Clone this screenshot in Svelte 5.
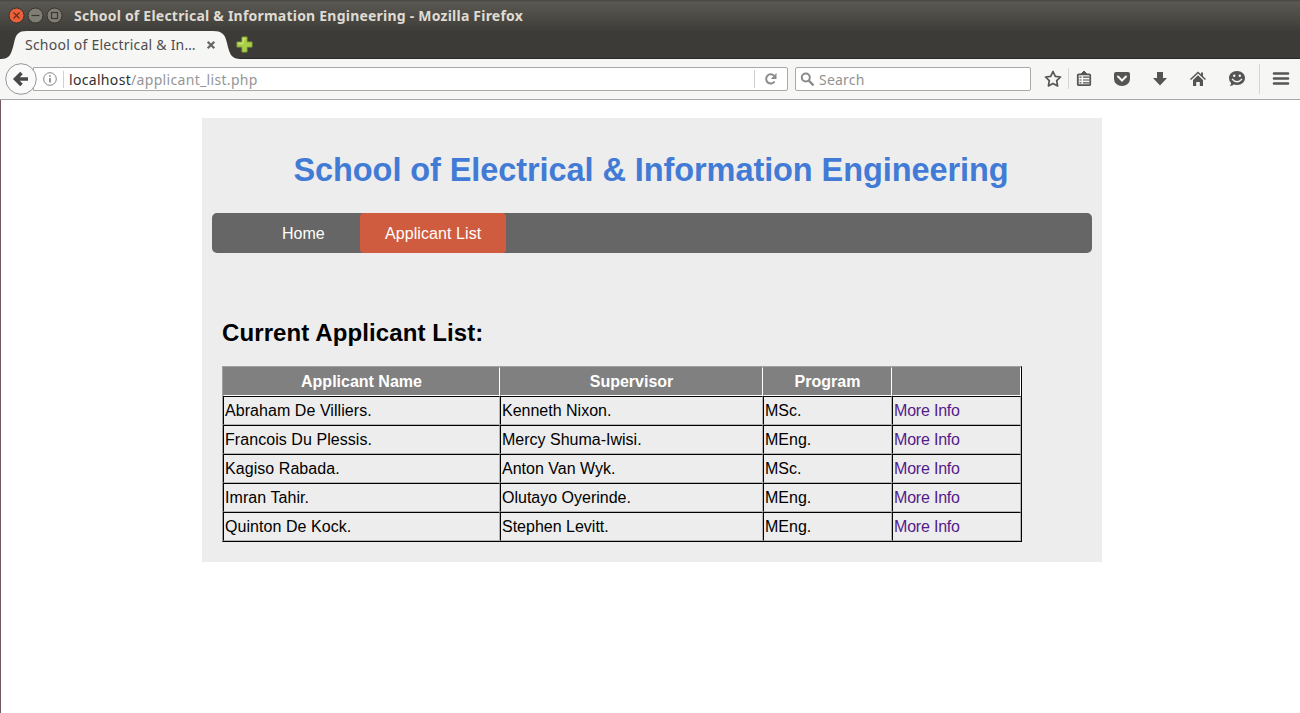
<script>
  const rows = [
    ['Abraham De Villiers.', 'Kenneth Nixon.', 'MSc.'],
    ['Francois Du Plessis.', 'Mercy Shuma-Iwisi.', 'MEng.'],
    ['Kagiso Rabada.', 'Anton Van Wyk.', 'MSc.'],
    ['Imran Tahir.', 'Olutayo Oyerinde.', 'MEng.'],
    ['Quinton De Kock.', 'Stephen Levitt.', 'MEng.']
  ];
</script>

<div class="window">
  <header class="titlebar">
    <svg class="controls" width="64" height="31" viewBox="0 0 64 31">
      <circle cx="16.500" cy="15.500" r="7.500" fill="#e9603a" stroke="#35332f" />
      <path d="M13.500 12.500l6 6m0-6l-6 6" stroke="#6d2b18" stroke-width="1.300" />
      <circle cx="35.500" cy="15.500" r="7.500" fill="#807d75" stroke="#35332f" />
      <path d="M31.500 15.500h8" stroke="#3b3934" stroke-width="1.200" />
      <circle cx="54.500" cy="15.500" r="7.500" fill="#807d75" stroke="#35332f" />
      <rect x="51.500" y="12.500" width="6" height="6" fill="none" stroke="#3b3934" stroke-width="1.200" />
    </svg>
    <span class="wtitle">School of Electrical &amp; Information Engineering - Mozilla Firefox</span>
  </header>
  <div class="tabs">
    <div class="tab">
      <svg class="tabshape" width="242" height="28" viewBox="0 0 242 28"><path d="M0 28C10 28 11 24 14 12C16 3 18 0 27 0H213C222 0 225 3 227 12C230 24 231 28 242 28Z" fill="#f6f6f4" /></svg>
      <span class="tabtext">School of Electrical &amp; In…</span>
      <svg class="close" width="10" height="10" viewBox="0 0 10 10"><path d="M1.700 1.700l6.600 6.600m0-6.600l-6.600 6.600" stroke="#666" stroke-width="2.200" /></svg>
    </div>
    <svg class="plus" width="17" height="17" viewBox="0 0 17 17"><path d="M6 1h5v5h5v5h-5v5H6v-5H1V6h5z" fill="#a9d148" stroke="#84a636" /><path d="M7 2.500h3m-8 5h5v-5" fill="none" stroke="#d0eb81" /></svg>
  </div>
  <div class="toolbar">
    <svg class="back" width="32" height="32" viewBox="0 0 32 32"><circle cx="16" cy="16" r="15.300" fill="#fafafa" stroke="#979797" /><path d="M16.500 10L10.500 16l6 6M11 16h12" fill="none" stroke="#484848" stroke-width="3.600" /></svg>
    <div class="urlbar">
      <svg class="info" width="14" height="14" viewBox="0 0 14 14"><circle cx="7" cy="7" r="6.300" fill="none" stroke="#858585" /><path d="M7 6v4.500M7 3.200v1.600" stroke="#777" stroke-width="1.500" /></svg>
      <i class="sep"></i>
      <span class="url"><b>localhost</b>/applicant_list.php</span>
      <div class="reload"><svg width="14" height="14" viewBox="0 0 14 14"><path d="M10.600 9.500A4.600 4.600 0 1 1 10 3.700" fill="none" stroke="#8b8b8b" stroke-width="2" /><path d="M12.500 1v6H6.800z" fill="#8b8b8b" /></svg></div>
    </div>
    <div class="search">
      <svg width="15" height="15" viewBox="0 0 15 15"><circle cx="5.800" cy="5.500" r="4" fill="none" stroke="#8b8b8b" stroke-width="2" /><path d="M8.700 8.500l4.800 4.800" stroke="#8b8b8b" stroke-width="2.400" /></svg>
      <span>Search</span>
    </div>
    <svg class="icons" width="260" height="40" viewBox="0 0 260 40" fill="none" stroke="#555">
      <path d="M13 12.500l2.300 4.800 5.200.700-3.800 3.700.900 5.200-4.600-2.500-4.600 2.500.900-5.200-3.800-3.700 5.200-.700z" stroke-width="1.700" stroke-linejoin="round" />
      <path d="M28.500 9v21M219.500 5v30" stroke="#d6d6d6" />
      <path d="M41 15l3-3 3 3z" fill="#555" stroke-width="1" />
      <rect x="37.800" y="15.300" width="12.400" height="10.900" rx="1" stroke-width="1.800" />
      <path d="M43 18.200h6M43 21h6M43 23.800h6M39.500 18.200h2M39.500 21h2M39.500 23.800h2" stroke-width="1.200" />
      <path d="M74 15q0-2 2-2h12q2 0 2 2v5a8 7 0 0 1-16 0z" fill="#555" stroke="none" /><path d="M78 17.500l4 4 4-4" stroke="#f6f6f4" stroke-width="2" stroke-linecap="round" />
      <path d="M117 13h6v6h4l-7 7.500-7-7.500h4z" fill="#555" stroke="none" />
      <path d="M150.500 20.500l7.500-7 7.500 7" stroke-width="1.500" /><path d="M153 21l5-4.800 5 4.800V27h-3.200v-4h-3.600v4H153zM161 13.500h2v4l-2-2z" fill="#555" stroke="none" />
      <path d="M197 12c4.600 0 8 2.900 8 7s-3.400 7-8 7c-1.200 0-2.200-.200-3.200-.500-1 .900-2.500 1.400-4.100 1.300 1-.800 1.400-1.800 1.400-2.700A6.600 6.600 0 0 1 189 19c0-4.100 3.400-7 8-7z" fill="#555" stroke="none" />
      <circle cx="194.200" cy="16.700" r="1.200" fill="#f6f6f4" stroke="none" /><circle cx="199.800" cy="16.700" r="1.200" fill="#f6f6f4" stroke="none" /><path d="M192 20q5 5.500 10 0" stroke="#f6f6f4" stroke-width="1.300" />
      <path d="M234 14.500h14M234 19.500h14M234 24.500h14" stroke-width="2.600" stroke-linecap="round" />
    </svg>
  </div>
  <main>
    <section class="page">
      <h1>School of Electrical &amp; Information Engineering</h1>
      <nav><a class="home" href="#home">Home</a><a class="active" href="#list">Applicant List</a></nav>
      <h2>Current Applicant List:</h2>
      <div class="table">
        <div class="row head"><div>Applicant Name</div><div>Supervisor</div><div>Program</div><div></div></div>
        {#each rows as r}
          <div class="row"><div>{r[0]}</div><div>{r[1]}</div><div>{r[2]}</div><div><a href="#info">More Info</a></div></div>
        {/each}
      </div>
    </section>
  </main>
</div>

<style>
  :global(body) { margin: 0; background: #fff; overflow: hidden; }
  * { box-sizing: border-box; }
  .window { width: 1300px; height: 713px; border-left: 1px solid #72595f; background: #fff; font-family: "Liberation Sans", Arial, sans-serif; }
  svg { display: block; flex: none; }
  .titlebar { height: 31px; margin-left: -1px; display: flex; align-items: center; background: linear-gradient(#46443f 0, #5a5851 2px, #3f3d39 100%); }
  .wtitle { margin-left: 10px; font: bold 14px "Noto Sans", sans-serif; color: #dfdbd2; white-space: nowrap; letter-spacing: .22px; }
  .tabs { height: 28px; margin-left: -1px; display: flex; background: #3c3b37; border-bottom: 1px solid #2b2a27; }
  .tab { width: 236px; height: 28px; display: grid; flex: none; }
  .tab > * { grid-area: 1 / 1; }
  .tabtext { z-index: 1; margin-left: 25px; font: 14px/28px "Noto Sans", sans-serif; color: #4d4d4d; letter-spacing: .23px; white-space: nowrap; }
  .close { z-index: 1; margin: 9px 0 0 206px; }
  .plus { margin-top: 5px; }
  .toolbar { height: 41px; margin-left: -1px; padding-left: 5px; background: #f6f6f4; border-bottom: 1px solid #a6a6a6; display: flex; align-items: center; font: 14px "Noto Sans", sans-serif; }
  .back { z-index: 1; }
  .urlbar { width: 755px; height: 24px; margin-left: -4px; border: 1px solid #a9a9a9; border-radius: 0 2px 2px 0; background: #fff; display: flex; align-items: center; padding-left: 9px; }
  .sep { width: 1px; height: 17px; margin: 0 5px 0 6px; background: #d0d0d0; }
  .url { color: #969696; white-space: nowrap; letter-spacing: .32px; }
  .url b { font-weight: 400; color: #303030; }
  .reload { margin-left: auto; height: 18px; width: 33px; border-left: 1px solid #cfcfcf; display: flex; align-items: center; padding-left: 9px; }
  .search { width: 236px; height: 24px; margin-left: 7px; border: 1px solid #a9a9a9; border-radius: 2px; background: #fff; display: flex; align-items: center; padding-left: 4px; gap: 4px; color: #929292; letter-spacing: .2px; }
  .icons { margin-left: 9px; }
  main { padding: 18px 0 0 201px; }
  .page { width: 900px; height: 444px; background: #ededed; padding: 28px 10px 0; }
  h1 { margin: 0; height: 67px; padding-right: 2px; font-size: 32.5px; line-height: 49px; letter-spacing: -.08px; text-align: center; color: #427bd6; white-space: nowrap; }
  nav { height: 40px; border-radius: 5px; background: #666; display: flex; padding-left: 45px; }
  nav a { color: #fff; text-decoration: none; line-height: 41px; padding: 0 25px; border-radius: 4px; white-space: nowrap; }
  .home { width: 103px; }
  .active { width: 146px; height: 40px; background: #cf5c3e; letter-spacing: .08px; }
  h2 { margin: 64px 0 0 10px; font-size: 24px; line-height: 32px; height: 49px; letter-spacing: .1px; white-space: nowrap; }
  .table { width: 800px; height: 176px; margin-left: 10px; border: 1px solid #000; border-top-color: #a0a0a0; border-left-color: #a0a0a0; }
  .row { height: 29px; display: grid; grid-template: 29px / 277px 263px 129px 129px; }
  .row > div { border: 1px solid; border-color: #000 #b5b5b5 #b5b5b5 #000; padding: 1px 1px 0; line-height: 26px; white-space: nowrap; }
  .row > div:first-child { letter-spacing: .06px; }
  .head > div { background: #808080; color: #fff; font-weight: 700; text-align: center; border-color: #808080 #fff #fff #808080; }
  .head > div:first-child { letter-spacing: 0; }
  .row a { color: #551a8b; text-decoration: none; letter-spacing: -.2px; }
</style>
